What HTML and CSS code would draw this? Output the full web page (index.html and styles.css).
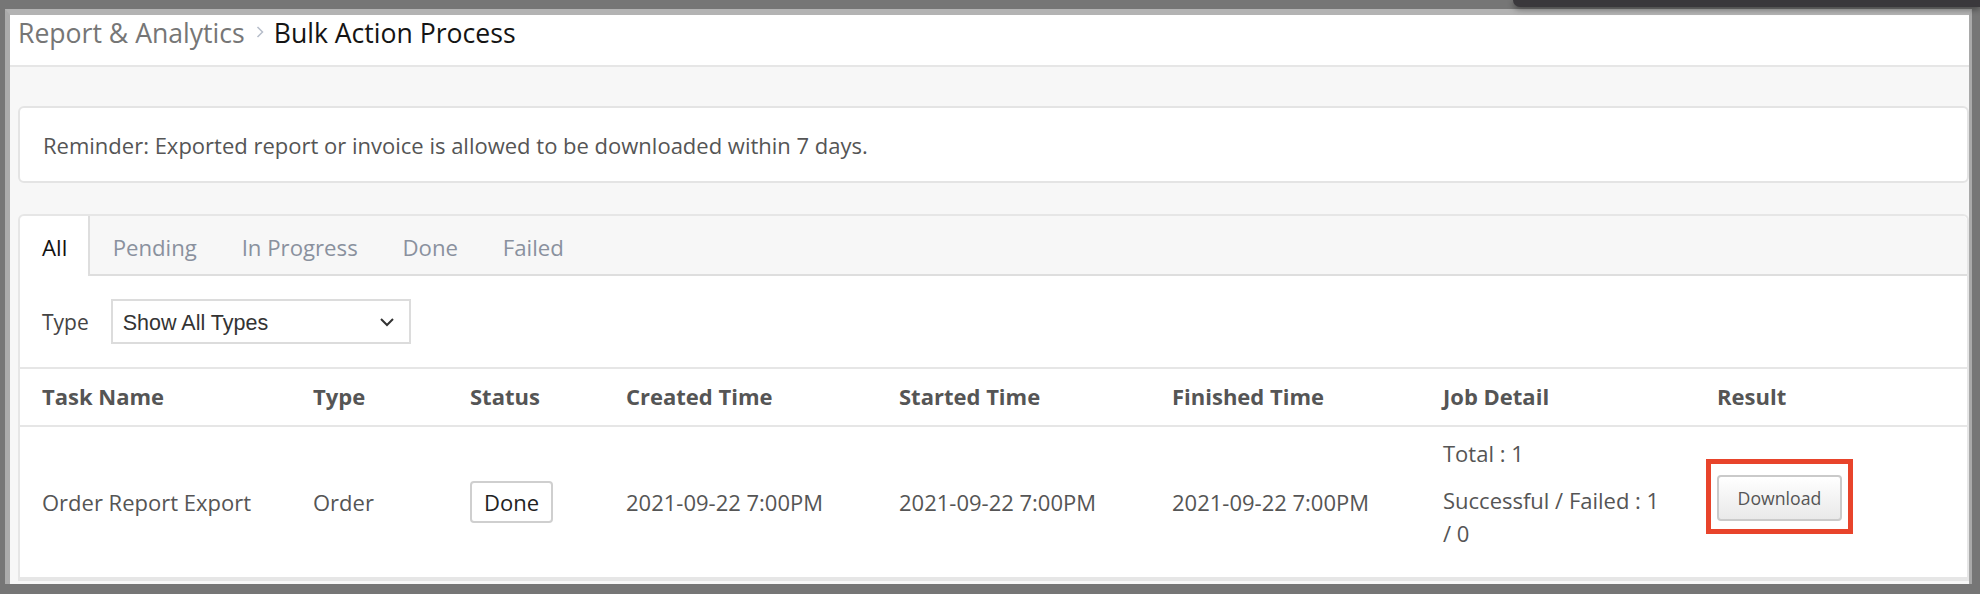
FILE: index.html
```html
<!DOCTYPE html>
<html lang="en">
<head>
<meta charset="utf-8">
<title>Bulk Action Process</title>
<link rel="stylesheet" href="styles.css">
</head>
<body>
<div class="os-bar"></div>
<div class="window">
  <header class="topbar">
    <nav class="crumbs">
      <span class="crumb-parent">Report &amp; Analytics</span>
      <svg class="crumb-sep" width="8" height="12" viewBox="0 0 8 12"><path d="M1.5 1 L6.5 6 L1.5 11" fill="none" stroke="#b6bdca" stroke-width="1.5"/></svg>
      <span class="crumb-current">Bulk Action Process</span>
    </nav>
  </header>
  <main class="content">
    <div class="reminder">Reminder: Exported report or invoice is allowed to be downloaded within 7 days.</div>
    <section class="panel">
      <div class="tabs">
        <div class="tab active">All</div>
        <div class="tab">Pending</div>
        <div class="tab">In Progress</div>
        <div class="tab">Done</div>
        <div class="tab">Failed</div>
      </div>
      <div class="filter">
        <span class="filter-label">Type</span>
        <div class="select">
          <span class="select-text">Show All Types</span>
          <svg class="select-caret" width="16" height="10" viewBox="0 0 16 10"><path d="M2 2 L8 8 L14 2" fill="none" stroke="#333" stroke-width="2"/></svg>
        </div>
      </div>
      <div class="table">
        <div class="row head">
          <div class="cell">Task Name</div>
          <div class="cell">Type</div>
          <div class="cell">Status</div>
          <div class="cell">Created Time</div>
          <div class="cell">Started Time</div>
          <div class="cell">Finished Time</div>
          <div class="cell">Job Detail</div>
          <div class="cell">Result</div>
        </div>
        <div class="row data">
          <div class="cell">Order Report Export</div>
          <div class="cell">Order</div>
          <div class="cell"><span class="status">Done</span></div>
          <div class="cell">2021-09-22 7:00PM</div>
          <div class="cell">2021-09-22 7:00PM</div>
          <div class="cell">2021-09-22 7:00PM</div>
          <div class="cell job">
            <p>Total : 1</p>
            <p>Successful / Failed : 1 / 0</p>
          </div>
          <div class="cell">
            <div class="mark"><button class="btn" type="button">Download</button></div>
          </div>
        </div>
      </div>
    </section>
  </main>
</div>
</body>
</html>
```
FILE: styles.css
```css
html, body {
  margin: 0;
  height: 594px;
  overflow: hidden;
}

body {
  position: relative;
  background: #767676;
  font-family: "Open Sans", "Noto Sans", sans-serif;
  color: #555;
}

.os-bar {
  position: absolute;
  top: 0;
  left: 1513px;
  right: 0;
  height: 7px;
  background: #3a383c;
  border-bottom-left-radius: 7px;
  box-shadow: 0 2px 6px rgba(0, 0, 0, 0.45);
  z-index: 2;
}

.window {
  margin: 9px 0 0 5px;
  width: 1967px;
  height: 575px;
  box-sizing: border-box;
  border-left: 5px solid #ababab;
  border-top: 6px solid #b3b3b3;
  border-right: 3px solid #a9a9a9;
  background: #f7f7f7;
  overflow: hidden;
}

.topbar {
  height: 50px;
  background: #fff;
  border-bottom: 2px solid #e6e6e6;
  padding-left: 8px;
}

.crumbs {
  display: flex;
  align-items: flex-start;
  font-size: 26.6px;
  line-height: 36px;
}

.crumb-parent {
  color: #767676;
}

.crumb-sep {
  margin: 11px 10px 0 11px;
  flex: none;
}

.crumb-current {
  color: #141414;
}

.content {
  padding: 39px 0 0 8px;
}

.reminder {
  background: #fff;
  border: 2px solid #e4e4e4;
  border-radius: 6px;
  padding: 21.5px 23px;
  font-size: 22px;
  line-height: 30px;
  color: #555;
  margin-bottom: 31px;
}

.panel {
  background: #fff;
  border: 2px solid #e6e6e6;
  border-radius: 6px 6px 0 0;
}

.tabs {
  display: flex;
  align-items: flex-start;
  height: 58px;
  background: #f7f7f7;
  border-bottom: 2px solid #dedede;
  border-radius: 5px 5px 0 0;
}

.tab {
  height: 58px;
  box-sizing: border-box;
  padding: 17px 22.4px 0;
  font-size: 22.2px;
  line-height: 30px;
  color: #8a919e;
}

.tab.active {
  height: 60px;
  margin-bottom: -2px;
  padding-left: 22px;
  padding-right: 21px;
  background: #fff;
  color: #111;
  border-right: 2px solid #dedede;
  border-top-left-radius: 5px;
}

.filter {
  display: flex;
  align-items: center;
  gap: 22px;
  padding: 23px 22px;
  border-bottom: 2px solid #e6e6e6;
}

.filter-label {
  font-size: 21px;
  line-height: 30px;
  color: #444;
}

.select {
  width: 300px;
  height: 45px;
  box-sizing: border-box;
  border: 2px solid #dcdcdc;
  display: flex;
  align-items: center;
  justify-content: space-between;
  padding: 0 14px 0 10px;
  font-family: "Liberation Sans", Arial, sans-serif;
  font-size: 21.5px;
  color: #333;
}

.select-text {
  padding-top: 4px;
}

.row {
  display: grid;
  grid-template-columns: 271px 157px 156px 273px 273px 271px 274px 1fr;
  border-bottom: 2px solid #e6e6e6;
}

.cell {
  padding: 0 22px;
  font-size: 22px;
  line-height: 30px;
  color: #555;
}

.head .cell {
  padding-top: 12px;
  padding-bottom: 14px;
  font-weight: 700;
}

.data {
  height: 150px;
  align-items: center;
}

.status {
  display: inline-block;
  border: 2px solid #cfcfcf;
  border-radius: 4px;
  padding: 4px 12px;
  color: #222;
}

.job {
  margin-bottom: 17px;
  padding-right: 30px;
}

.job p {
  margin: 0;
  line-height: 33px;
}

.job p + p {
  margin-top: 14px;
}

.mark {
  display: inline-block;
  border: 5px solid #e8442b;
  padding: 11px 6px 8px;
  margin-left: -11px;
  margin-bottom: 11px;
}

.btn {
  display: block;
  width: 125px;
  height: 46px;
  box-sizing: border-box;
  border: 2px solid #cacaca;
  border-radius: 4px;
  background: linear-gradient(#ffffff, #e9e9e9);
  font-family: "Open Sans", "Noto Sans", sans-serif;
  font-size: 17.7px;
  color: #555;
  padding: 0;
}
```
